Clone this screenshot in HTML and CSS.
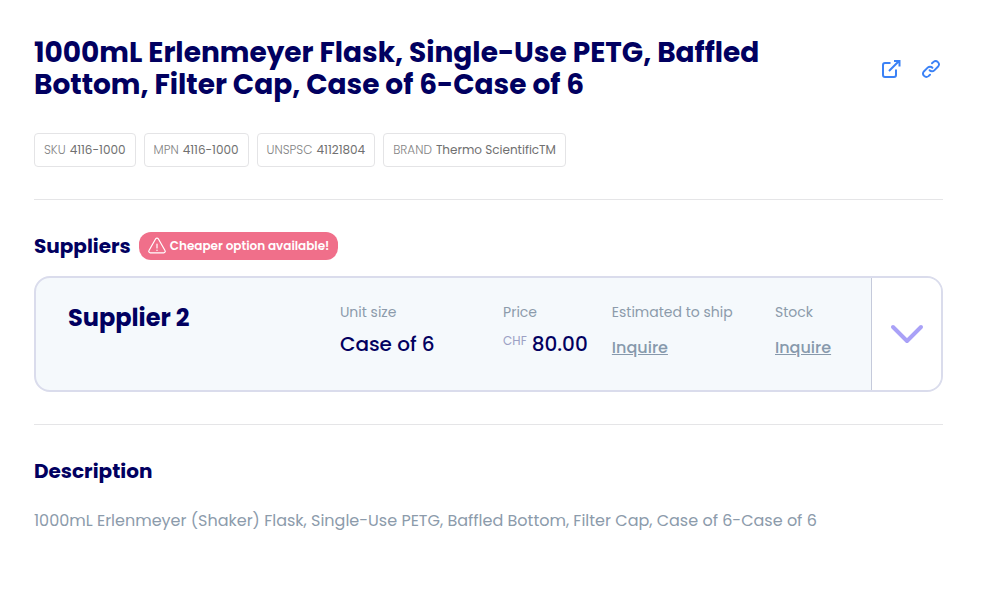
FILE: index.html
```html
<!DOCTYPE html>
<html lang="en">
<head>
<meta charset="utf-8">
<meta name="viewport" content="width=device-width, initial-scale=1">
<title>1000mL Erlenmeyer Flask</title>
<link rel="stylesheet" href="styles.css">
</head>
<body>
<main class="product">
  <header class="product-header">
    <h1 class="product-title">1000mL Erlenmeyer Flask, Single-Use PETG, Baffled Bottom, Filter Cap, Case of 6-Case of 6</h1>
    <div class="product-actions">
      <a class="icon-link" href="#open" aria-label="Open in new tab">
        <svg width="20" height="20" viewBox="0 0 20 20" fill="none" stroke="currentColor" stroke-width="2"><path d="M9.500 4H4a2 2 0 0 0-2 2v10a2 2 0 0 0 2 2h9a2 2 0 0 0 2-2v-5.500M8 12 18 2M13 2h5.500v5.500"/></svg>
      </a>
      <a class="icon-link" href="#link" aria-label="Copy link">
        <svg width="20" height="20" viewBox="0 0 20 20" fill="none" stroke="currentColor" stroke-width="1.900" stroke-linecap="round" stroke-linejoin="round"><path d="M9 15.700 7.500 17.130A3.300 3.300 0 0 1 2.870 12.470L6.670 8.670A3.300 3.300 0 0 1 11.400 8.750M11 4.300 12.500 2.870A3.300 3.300 0 0 1 17.130 7.530L13.330 11.330A3.300 3.300 0 0 1 8.600 11.250"/></svg>
      </a>
    </div>
  </header>

  <ul class="tags">
    <li class="tag"><span class="tag-name">SKU</span> 4116-1000</li>
    <li class="tag"><span class="tag-name">MPN</span> 4116-1000</li>
    <li class="tag"><span class="tag-name">UNSPSC</span> 41121804</li>
    <li class="tag"><span class="tag-name">BRAND</span> Thermo ScientificTM</li>
  </ul>

  <section class="section">
    <div class="section-head">
      <h2 class="section-title">Suppliers</h2>
      <span class="badge">
        <svg width="18" height="18" viewBox="0 0 18 18" fill="none" stroke="currentColor" stroke-linecap="round" stroke-linejoin="round" aria-hidden="true"><path stroke-width="1.200" d="M7.700 1.800 1 13.500a1.500 1.500 0 0 0 1.300 2.300h13.400A1.500 1.500 0 0 0 17 13.500L10.300 1.800a1.500 1.500 0 0 0-2.600 0ZM9 7v4M9 13v.4"/></svg>
        Cheaper option available!
      </span>
    </div>
    <article class="supplier">
      <div class="supplier-body">
        <h3 class="supplier-name">Supplier 2</h3>
        <div class="field">
          <span class="label">Unit size</span>
          <span class="value">Case of 6</span>
        </div>
        <div class="field">
          <span class="label">Price</span>
          <span class="value price"><span class="currency">CHF</span>80.00</span>
        </div>
        <div class="field">
          <span class="label">Estimated to ship</span>
          <a class="inquire" href="#ship">Inquire</a>
        </div>
        <div class="field">
          <span class="label">Stock</span>
          <a class="inquire" href="#stock">Inquire</a>
        </div>
      </div>
      <button class="expand" type="button" aria-label="Show supplier details">
        <svg width="36" height="24" viewBox="0 0 36 24" fill="none" stroke="currentColor" stroke-width="4" stroke-linecap="round" stroke-linejoin="round"><path d="m4 5 14 14L32 5"/></svg>
      </button>
    </article>
  </section>

  <section class="section">
    <h2 class="section-title">Description</h2>
    <p class="description">1000mL Erlenmeyer (Shaker) Flask, Single-Use PETG, Baffled Bottom, Filter Cap, Case of 6-Case of 6</p>
  </section>
</main>
</body>
</html>
```
FILE: styles.css
```css
* { box-sizing: border-box; }

body {
  margin: 0;
  background: #fff;
  color: #010060;
  font-family: Poppins, Inter, "Liberation Sans", sans-serif;
}

h1, h2, h3, p, ul { margin: 0; padding: 0; }

.product { padding: 37px 38px 36px 34px; }

.product-header {
  display: flex;
  align-items: center;
  justify-content: space-between;
  gap: 32px;
}

.product-title {
  max-width: 740px;
  font-size: 28px;
  line-height: 32px;
  font-weight: 700;
}

.product-actions { display: flex; gap: 20px; padding-right: 2px; }

.icon-link { display: flex; color: #3b82f6; }

.tags {
  display: flex;
  flex-wrap: wrap;
  gap: 8px;
  margin-top: 32px;
  list-style: none;
}

.tag {
  display: flex;
  gap: 4px;
  padding: 8px 9px;
  border: 1px solid #e4e4e6;
  border-radius: 4px;
  color: #707070;
  font-size: 12px;
  line-height: 16px;
}

.tag-name { color: #858585; font-weight: 300; }

.section {
  margin-top: 32px;
  padding-top: 32px;
  border-top: 1px solid #e5e5e7;
}

.section-head {
  display: flex;
  align-items: center;
  gap: 8px;
  margin-bottom: 16px;
}

.section-title {
  font-size: 20px;
  line-height: 28px;
  font-weight: 700;
}

.badge {
  display: flex;
  align-items: center;
  gap: 4px;
  padding: 0 9px;
  border-radius: 12px;
  background: #f06f8a;
  color: #fff;
  font-size: 12px;
  line-height: 28px;
  font-weight: 600;
}

.supplier {
  display: flex;
  min-height: 116px;
  overflow: hidden;
  border: 2px solid #dadcec;
  border-radius: 16px;
  background: #f5f9fc;
}

.supplier-body {
  flex: 1;
  display: grid;
  grid-template-columns: 5fr 3fr 2fr 3fr 96px;
  align-items: start;
  padding: 24px 0 24px 32px;
}

.supplier-name {
  font-size: 24px;
  line-height: 32px;
  font-weight: 700;
}

.field {
  display: flex;
  flex-direction: column;
  align-items: flex-start;
  min-width: 0;
  white-space: nowrap;
}

.label {
  color: #8c9bab;
  font-size: 14px;
  line-height: 20px;
}

.value {
  margin-top: 8px;
  font-size: 20px;
  line-height: 28px;
  font-weight: 500;
}

.price { display: flex; gap: 5px; }

.currency {
  color: #9ca0c4;
  font-size: 12px;
  line-height: 22px;
  font-weight: 400;
}

.inquire {
  margin-top: 14px;
  color: #8799ac;
  font-size: 16px;
  line-height: 24px;
  font-weight: 500;
}

.expand {
  display: grid;
  place-items: center;
  width: 70px;
  padding: 0;
  border: 0;
  border-left: 1px solid #c5cadb;
  background: #fff;
  color: #a9a1f7;
  cursor: pointer;
}

.description {
  margin-top: 24px;
  color: #8c9bab;
  font-size: 16px;
  line-height: 24px;
}
```
